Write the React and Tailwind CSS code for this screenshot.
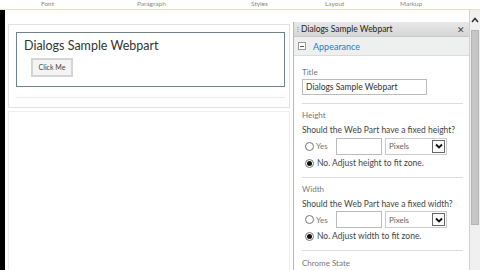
import React from "react";

function Radio({ checked }) {
  return (
    <span className="inline-flex items-center justify-center w-[9px] h-[9px] rounded-full border border-[#777] bg-white">
      {checked && <span className="w-[5px] h-[5px] rounded-full bg-[#111]" />}
    </span>
  );
}

function SizeGroup({ label, question, noText }) {
  return (
    <div className="flex flex-col">
      <div className="text-[8px] text-[#777] leading-none">{label}</div>
      <div className="mt-[7px] text-[8.5px] text-[#444] leading-none whitespace-nowrap">{question}</div>
      <div className="mt-[3px] flex items-center">
        <span className="ml-[3px] flex"><Radio /></span>
        <span className="ml-[2px] text-[8px] text-[#777] w-[20px]">Yes</span>
        <div className="w-[46px] h-[17px] border border-[#bbb] bg-white" />
        <div className="ml-[3px] w-[62px] h-[17px] border border-[#ccc] bg-white flex items-center">
          <span className="ml-[3px] text-[8px] text-[#666] flex-1">Pixels</span>
          <span className="w-[13px] h-[13px] mr-[1px] border border-[#666] flex items-center justify-center">
            <svg width="8" height="6" viewBox="0 0 8 6">
              <path d="M1 1.5 L4 4.5 L7 1.5" fill="none" stroke="#111" strokeWidth="1.8" />
            </svg>
          </span>
        </div>
      </div>
      <div className="mt-[4px] flex items-center">
        <span className="ml-[3px] flex"><Radio checked /></span>
        <span className="ml-[3px] text-[8.5px] text-[#444] leading-none">{noText}</span>
      </div>
    </div>
  );
}

export default function App() {
  return (
    <div className="w-[480px] h-[270px] bg-white overflow-hidden font-['Lato',sans-serif] flex flex-col">
      {/* ribbon group labels */}
      <div className="h-[10px] shrink-0 border-b border-[#eadfb8] text-[6.5px] text-[#888] leading-none relative">
        <span className="absolute left-[41px] top-[1px]">Font</span>
        <span className="absolute left-[137px] top-[1px]">Paragraph</span>
        <span className="absolute left-[251px] top-[1px]">Styles</span>
        <span className="absolute left-[325px] top-[1px]">Layout</span>
        <span className="absolute left-[400px] top-[1px]">Markup</span>
      </div>

      <div className="flex flex-1 min-h-0">
        <div className="w-[5px] shrink-0 bg-black" />

        {/* page area */}
        <div className="w-[285px] shrink-0 flex flex-col pt-[14px] pl-[3px]">
          <div className="shrink-0 border border-[#e2e2e2] h-[84px] pt-[7px] pl-[7px] pr-[4px]">
            <div className="border border-[#6e8390] h-[55px] pl-[7px] pt-[4px]">
              <div className="text-[12.5px] text-[#333] leading-none mt-[3px]">Dialogs Sample Webpart</div>
              <div className="mt-[5px] ml-[7px] w-[42px] h-[19px] border-2 border-[#d4d4d4] bg-[#f4f4f4] flex items-center justify-center text-[7px] text-[#444]">
                Click Me
              </div>
            </div>
            <div className="mt-[10px] border-t border-[#ececec]" />
          </div>
          <div className="mt-[3px] flex-1 border-l border-r border-t border-[#eeeeee]" />
        </div>

        <div className="w-[3px] shrink-0" />

        {/* tool pane */}
        <div className="w-[176px] shrink-0 flex flex-col border-l border-[#b9b9b9] mt-[12px]">
          <div className="h-[15px] shrink-0 bg-gradient-to-b from-[#e8e8e8] to-[#d6d6d6] border-b border-[#c8c8c8] flex items-center pl-[3px] pr-[4px]">
            <span className="text-[7px] text-[#666] leading-none mr-[2px]">⁝</span>
            <span className="text-[8.5px] text-[#222] leading-none flex-1">Dialogs Sample Webpart</span>
            <span className="text-[9px] text-[#444] leading-none">✕</span>
          </div>
          <div className="h-[19px] shrink-0 bg-[#eef0f0] border-b border-[#dcdcdc] flex items-center pl-[4px]">
            <span className="w-[8px] h-[8px] border border-[#999] bg-white flex items-center justify-center">
              <span className="w-[4px] h-px bg-[#555]" />
            </span>
            <span className="ml-[7px] text-[9px] text-[#2b79b5] leading-none">Appearance</span>
          </div>
          <div className="pl-[8px] pr-[6px] pt-[12px] flex flex-col shrink-0">
            <div className="text-[8px] text-[#777] leading-none">Title</div>
            <div className="mt-[3px] w-[125px] h-[16px] border border-[#bbb] flex items-center pl-[3px] text-[8.5px] text-[#333]">
              Dialogs Sample Webpart
            </div>
            <div className="mt-[8px] border-t border-[#ddd]" />
            <div className="pt-[7px]">
              <SizeGroup label="Height" question="Should the Web Part have a fixed height?" noText="No. Adjust height to fit zone." />
            </div>
            <div className="mt-[9px] border-t border-[#ddd]" />
            <div className="pt-[7px]">
              <SizeGroup label="Width" question="Should the Web Part have a fixed width?" noText="No. Adjust width to fit zone." />
            </div>
            <div className="mt-[9px] border-t border-[#ddd]" />
            <div className="pt-[8px] text-[8px] text-[#777] leading-none">Chrome State</div>
          </div>
        </div>

        {/* scrollbar */}
        <div className="w-[11px] shrink-0 flex flex-col border-l border-[#d0d0d0] bg-[#f0f0f0]">
          <div className="h-[20px] shrink-0 flex items-center justify-center">
            <svg width="8" height="6" viewBox="0 0 8 6">
              <path d="M1 5 L4 1.5 L7 5" fill="none" stroke="#333" strokeWidth="1.6" />
            </svg>
          </div>
          <div className="mx-[1px] h-[195px] shrink-0 bg-[#c6c6c6] border border-[#b4b4b4]" />
          <div className="flex-1" />
        </div>
      </div>
    </div>
  );
}
